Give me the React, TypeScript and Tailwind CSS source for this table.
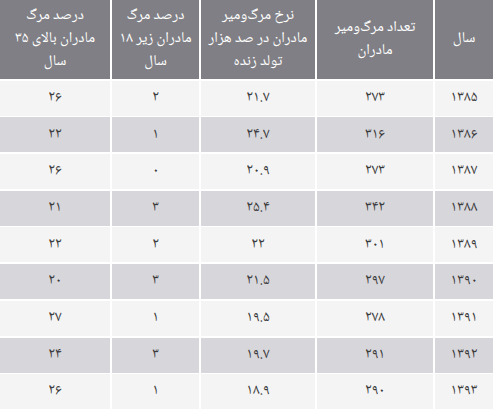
import React from "react";

const rows: string[][] = [
  ["۱۳۸۵", "۲۷۳", "۲۱.۷", "۲", "۲۶"],
  ["۱۳۸۶", "۳۱۶", "۲۴.۷", "۱", "۲۲"],
  ["۱۳۸۷", "۲۷۳", "۲۰.۹", "۰", "۲۶"],
  ["۱۳۸۸", "۳۴۲", "۲۵.۴", "۳", "۲۱"],
  ["۱۳۸۹", "۳۰۱", "۲۲", "۲", "۲۲"],
  ["۱۳۹۰", "۲۹۷", "۲۱.۵", "۳", "۲۰"],
  ["۱۳۹۱", "۲۷۸", "۱۹.۵", "۱", "۲۷"],
  ["۱۳۹۲", "۲۹۱", "۱۹.۷", "۳", "۲۴"],
  ["۱۳۹۳", "۲۹۰", "۱۸.۹", "۱", "۲۶"],
];

const headers: string[][] = [
  ["سال"],
  ["تعداد مرگ‌ومیر", "مادران"],
  ["نرخ مرگ‌ومیر", "مادران در صد هزار", "تولد زنده"],
  ["درصد مرگ", "مادران زیر ۱۸", "سال"],
  ["درصد مرگ", "مادران بالای ۳۵", "سال"],
];

export default function App() {
  return (
    <div
      className="w-[493px] h-[415px] bg-white overflow-hidden"
      style={{ fontFamily: '"Noto Naskh Arabic", "Noto Sans Arabic", "DejaVu Sans", sans-serif' }}
    >
      <div
        dir="rtl"
        className="grid grid-cols-[58px_116px_114px_87px_110px] gap-x-[2px] gap-y-[1.7px] grid-rows-[79px] auto-rows-[35px]"
      >
        {headers.map((lines, i) => (
          <div
            key={i}
            className="bg-[#807f85] text-white flex flex-col items-center justify-center text-[15px] leading-[23px]"
          >
            {lines.map((l, j) => (
              <span key={j}>{l}</span>
            ))}
          </div>
        ))}
        {rows.map((r, ri) =>
          r.map((c, ci) => (
            <div
              key={ri + "-" + ci}
              className={
                (ri % 2 === 0 ? "bg-[#f4f4f5]" : "bg-[#d7d6db]") +
                " flex items-center justify-center text-[15px] text-[#3a3a3a]"
              }
            >
              {c}
            </div>
          ))
        )}
      </div>
    </div>
  );
}
